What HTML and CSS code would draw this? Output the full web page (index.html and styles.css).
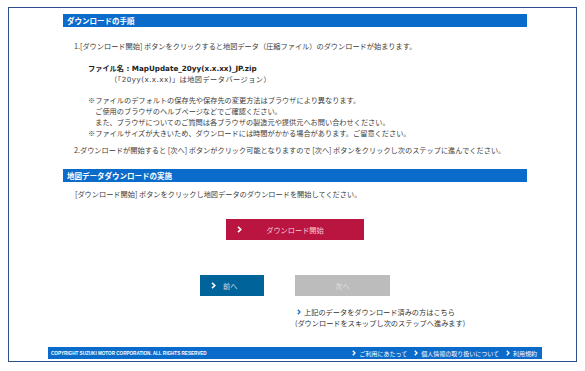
FILE: index.html
```html
<!DOCTYPE html>
<html lang="ja">
<head>
    <meta charset="UTF-8">
    <meta name="viewport" content="width=device-width, initial-scale=1.0">
    <title>地図データダウンロード</title>
    <link rel="stylesheet" href="styles.css">
</head>
<body>
    <div class="frame">
        <div class="content">
            <h2 class="bar">ダウンロードの手順</h2>
            <p class="step">1.[ダウンロード開始] ボタンをクリックすると地図データ（圧縮ファイル）のダウンロードが始まります。</p>

            <div class="file">
                <p class="file-name">ファイル名 : MapUpdate_20yy(x.x.xx)_JP.zip</p>
                <p class="file-note">（「20yy(x.x.xx)」は地図データバージョン）</p>
            </div>

            <ul class="notes">
                <li>※ファイルのデフォルトの保存先や保存先の変更方法はブラウザにより異なります。<br>ご使用のブラウザのヘルプページなどでご確認ください。<br>また、ブラウザについてのご質問は各ブラウザの製造元や提供元へお問い合わせください。</li>
                <li>※ファイルサイズが大きいため、ダウンロードには時間がかかる場合があります。ご留意ください。</li>
            </ul>

            <p class="step step-2">2.ダウンロードが開始すると [次へ] ボタンがクリック可能となりますので [次へ] ボタンをクリックし次のステップに進んでください。</p>

            <h2 class="bar bar-2">地図データダウンロードの実施</h2>
            <p class="lead">[ダウンロード開始] ボタンをクリックし地図データのダウンロードを開始してください。</p>

            <button class="btn btn-start" type="button">
                <svg class="chev" width="5" height="7" viewBox="0 0 5 7"><path d="M1 0.8 L3.8 3.5 L1 6.2" fill="none" stroke="#fff" stroke-width="1.6"/></svg>
                <span class="btn-label">ダウンロード開始</span>
            </button>

            <div class="nav">
                <button class="btn btn-prev" type="button">
                    <svg class="chev" width="5" height="7" viewBox="0 0 5 7"><path d="M1 0.8 L3.8 3.5 L1 6.2" fill="none" stroke="#fff" stroke-width="1.6"/></svg>
                    <span>前へ</span>
                </button>
                <button class="btn btn-next" type="button" disabled>次へ</button>
                <div class="skip">
                    <p><svg class="chev-link" width="4" height="6" viewBox="0 0 4 6"><path d="M0.8 0.7 L3 3 L0.8 5.3" fill="none" stroke="#1a6fc4" stroke-width="1.3"/></svg>上記のデータをダウンロード済みの方はこちら</p>
                    <p>(ダウンロードをスキップし次のステップへ進みます)</p>
                </div>
            </div>
        </div>

        <div class="footer">
            <span class="copyright">COPYRIGHT SUZUKI MOTOR CORPORATION. ALL RIGHTS RESERVED</span>
            <ul class="footer-links">
                <li><svg width="4" height="6" viewBox="0 0 4 6"><path d="M0.8 0.7 L3 3 L0.8 5.3" fill="none" stroke="#fff" stroke-width="1.3"/></svg>ご利用にあたって</li>
                <li><svg width="4" height="6" viewBox="0 0 4 6"><path d="M0.8 0.7 L3 3 L0.8 5.3" fill="none" stroke="#fff" stroke-width="1.3"/></svg>個人情報の取り扱いについて</li>
                <li><svg width="4" height="6" viewBox="0 0 4 6"><path d="M0.8 0.7 L3 3 L0.8 5.3" fill="none" stroke="#fff" stroke-width="1.3"/></svg>利用規約</li>
            </ul>
        </div>
    </div>
</body>
</html>
```

FILE: styles.css
```css
* {
    box-sizing: border-box;
}
body {
    margin: 0;
    background-color: #fff;
    font-family: "Noto Sans CJK JP", "Noto Sans", sans-serif;
    font-size: 7.2px;
    line-height: 11px;
    color: #3c3c3c;
}
p {
    margin: 0;
}
.frame {
    width: 569px;
    height: 355px;
    margin: 7px 0 0 8px;
    border: 1px solid #2c4e8c;
    display: flex;
    flex-direction: column;
}
.content {
    width: 464px;
    margin: 6px 0 0 54px;
}
.bar {
    height: 13px;
    margin: 0;
    padding-left: 4px;
    background-color: #0b6bcb;
    color: #fff;
    font-size: 7.5px;
    font-weight: bold;
    line-height: 13px;
}
.bar-2 {
    margin-top: 13px;
}
.step {
    margin: 14px 0 0 11px;
}
.step-2 {
    margin-top: 6px;
}
.file {
    margin: 11px 0 0 25px;
    font-family: "DejaVu Sans", "Noto Sans CJK JP", sans-serif;
}
.file-name {
    font-weight: bold;
    color: #222;
}
.file-note {
    margin-left: 22px;
    letter-spacing: 0.45px;
}
.notes {
    margin: 10px 0 0 25px;
    padding: 0;
    list-style: none;
}
.notes li {
    padding-left: 1em;
    text-indent: -1em;
}
.lead {
    margin: 7px 0 0 12px;
}
.btn {
    display: flex;
    align-items: center;
    height: 21px;
    padding: 0;
    border: none;
    font-family: inherit;
    font-size: 7.2px;
    cursor: pointer;
}
.btn-start {
    width: 138px;
    margin: 19px auto 0;
    padding: 0 16px 0 11px;
    background-color: #ba1541;
    color: #f3cdd6;
}
.btn-label {
    flex: 1;
    text-align: center;
}
.chev {
    flex: none;
}
.nav {
    display: grid;
    grid-template-columns: 64px 95px;
    justify-content: center;
    column-gap: 31px;
    row-gap: 11px;
    margin-top: 35px;
}
.btn-prev {
    padding-left: 11px;
    gap: 7px;
    background-color: #00649b;
    color: #d3e3ee;
}
.btn-next {
    justify-content: center;
    background-color: #bcbcbc;
    color: #e2e2e2;
    cursor: default;
}
.skip {
    grid-column: 2;
    white-space: nowrap;
    color: #333;
}
.chev-link {
    margin: 0 3px 0 2px;
}
.footer {
    display: flex;
    align-items: center;
    justify-content: space-between;
    width: 494px;
    height: 12px;
    margin: auto 0 2px 39px;
    padding: 0 5px 0 3px;
    background-color: #0b6bcb;
    color: #fff;
}
.copyright {
    font-family: "Liberation Sans", Arial, sans-serif;
    font-size: 4.6px;
    font-weight: bold;
}
.footer-links {
    display: flex;
    gap: 7px;
    margin: 0;
    padding: 0;
    list-style: none;
    font-size: 6px;
}
.footer-links li {
    display: flex;
    align-items: center;
    gap: 3px;
}
```
